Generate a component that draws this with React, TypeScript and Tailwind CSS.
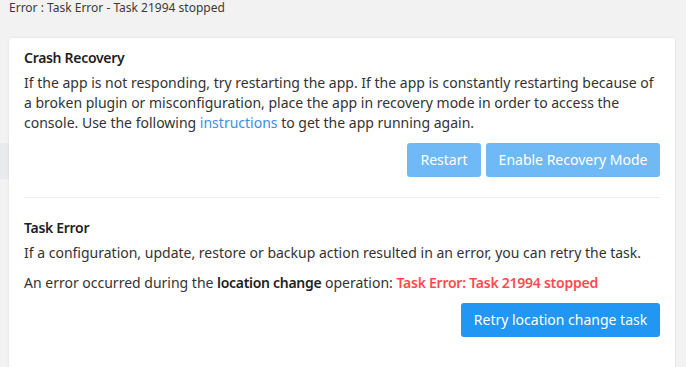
export default function App() {
  return (
    <div className="min-h-[367px] overflow-hidden bg-[#f2f2f2] font-['Noto_Sans',sans-serif] text-[#333]">
      <div className="relative pl-[9px] pr-[11px]">
        <div className="absolute left-0 top-[143px] h-[36px] w-[9px] bg-[#e9eaed]" />
        <p className="pt-[1px] text-[12px] leading-[14px] text-[#3a3a3a]">
          Error : Task Error - Task 21994 stopped
        </p>
        <div className="relative mt-[23px] rounded-[3px] bg-white px-[15px] pb-[40px] pt-[10px] text-[14px] leading-[20px] shadow-[0_0_3px_rgba(0,0,0,0.08)]">
          <h2 className="font-semibold tracking-[-0.3px] text-[#1e1e1e]">Crash Recovery</h2>
          <p className="mt-[5px]">
            If the app is not responding, try restarting the app. If the app is constantly
            restarting because of a broken plugin or misconfiguration, place the app in recovery
            mode in order to access the console. Use the following{' '}
            <a className="text-[#3a8ee6]">instructions</a> to get the app running again.
          </p>
          <div className="mt-[10px] flex justify-end gap-[5px]">
            <button className="h-[34px] w-[74px] rounded-[3px] bg-[#6fbaf6] text-white">
              Restart
            </button>
            <button className="h-[34px] w-[174px] rounded-[3px] bg-[#6fbaf6] text-white">
              Enable Recovery Mode
            </button>
          </div>
          <div className="mt-[20px] border-t border-[#ececec]" />
          <h2 className="mt-[20px] font-semibold tracking-[-0.3px] text-[#1e1e1e]">Task Error</h2>
          <p className="mt-[5px]">
            If a configuration, update, restore or backup action resulted in an error, you can
            retry the task.
          </p>
          <p className="mt-[10px]">
            An error occurred during the{' '}
            <span className="font-semibold tracking-[-0.3px] text-[#1e1e1e]">location change</span>{' '}
            operation:{' '}
            <span className="font-semibold tracking-[-0.25px] text-[#ff4a4f]">Task Error: Task 21994 stopped</span>
          </p>
          <div className="mt-[10px] flex justify-end">
            <button className="h-[34px] w-[199px] rounded-[3px] bg-[#2196f3] text-white">
              Retry location change task
            </button>
          </div>
        </div>
      </div>
    </div>
  );
}
